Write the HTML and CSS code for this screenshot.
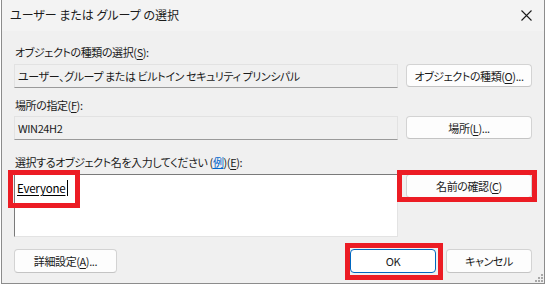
FILE: index.html
```html
<!DOCTYPE html>
<html lang="ja">
<head>
<meta charset="utf-8">
<title>ユーザー または グループ の選択</title>
<link rel="stylesheet" href="styles.css">
</head>
<body>
<div class="window">
  <div class="titlebar">
    <span class="title">ユーザー または グループ の選択</span>
    <span class="close"><svg width="11" height="11" viewBox="0 0 11 11"><path d="M0.5 0.5L10.5 10.5M10.5 0.5L0.5 10.5" stroke="#1b1b1b" stroke-width="1.1" fill="none"/></svg></span>
  </div>
  <div class="content">
    <div class="grid">
      <div class="label l1">オブジェクトの種類の選択(<u>S</u>):</div>
      <div class="field f1">ユーザー、グループ または ビルトイン セキュリティ プリンシパル</div>
      <button class="btn b1">オブジェクトの種類(<u>O</u>)...</button>
      <div class="label l2">場所の指定(<u>F</u>):</div>
      <div class="field f2">WIN24H2</div>
      <button class="btn b2">場所(<u>L</u>)...</button>
      <div class="label l3">選択するオブジェクト名を入力してください (<span class="link">例</span>)(<u>E</u>):</div>
      <div class="textarea"><span class="name">Everyone</span><span class="caret"></span></div>
      <button class="btn b3">名前の確認(<u>C</u>)</button>
    </div>
    <div class="footer">
      <button class="btn adv">詳細設定(<u>A</u>)...</button>
      <div class="spacer"></div>
      <button class="btn ok">OK</button>
      <button class="btn cancel">キャンセル</button>
    </div>
  </div>
  <div class="grip">
    <i class="d d1"></i><i class="d d2"></i><i class="d d3"></i><i class="d d4"></i><i class="d d5"></i><i class="d d6"></i>
  </div>
  <div class="mark m1"></div>
  <div class="mark m2"></div>
  <div class="mark m3"></div>
</div>
</body>
</html>
```

FILE: styles.css
```css
* { box-sizing: border-box; }
html, body { margin: 0; padding: 0; background: #ffffff; }
body {
  font-family: "Noto Sans CJK JP", "Noto Sans", sans-serif;
  font-size: 12px;
  font-feature-settings: "palt";
  color: #1a1a1a;
}
.window {
  position: relative;
  margin-left: 1px;
  width: 544px;
  height: 284px;
  border-left: 1px solid #8c8c8c;
  border-right: 1px solid #8c8c8c;
  border-bottom: 1px solid #8c8c8c;
  background: #f0f0f0;
  display: flex;
  flex-direction: column;
}
.titlebar {
  height: 31px;
  background: #f3f3f3;
  display: flex;
  align-items: center;
  padding-left: 8px;
  padding-right: 8px;
}
.title {
  flex: 1;
  line-height: 16px;
  color: #1b1b1b;
  margin-top: -1px;
}
.close {
  display: flex;
  width: 11px;
  height: 11px;
  margin-right: 4px;
  margin-top: -1px;
}
.content {
  flex: 1;
  padding: 13px 12px 0 12px;
  font-size: 11px;
  letter-spacing: -0.4px;
}
.grid {
  display: grid;
  grid-template-columns: 384px 126px;
  column-gap: 8px;
  align-items: start;
}
.label {
  grid-column: 1;
  line-height: 16px;
  height: 16px;
  white-space: nowrap;
  color: #1a1a1a;
  padding-left: 1px;
}
.l1 { grid-row: 1; }
.l2 { grid-row: 3; margin-top: 9px; }
.l3 { grid-row: 5; margin-top: 14px; }
.field {
  height: 24px;
  background: #f0f0f0;
  border: 1px solid #e2e2e2;
  border-bottom: 1px solid #9a9a9a;
  padding: 3px 0 0 3px;
  line-height: 16px;
  white-space: nowrap;
  overflow: hidden;
  color: #1a1a1a;
}
.f1 { grid-column: 1; grid-row: 2; margin-top: 4px; }
.f2 { grid-column: 1; grid-row: 4; margin-top: 3px; }
.btn {
  font: inherit;
  font-feature-settings: "palt";
  letter-spacing: -0.4px;
  color: #1a1a1a;
  height: 24px;
  background: #fdfdfd;
  border: 1px solid #d3d3d3;
  border-bottom-color: #c4c4c4;
  border-radius: 4px;
  padding: 0;
  line-height: 20px;
  text-align: center;
  white-space: nowrap;
}
.b1 { grid-column: 2; grid-row: 2; margin-top: 4px; height: 23px; }
.b2 { grid-column: 2; grid-row: 4; margin-top: 3px; height: 23px; }
.b3 { grid-column: 2; grid-row: 6; margin-top: 4px; }
.textarea {
  grid-column: 1;
  grid-row: 6;
  margin-top: 4px;
  height: 63px;
  background: #ffffff;
  border-top: 1px solid #7a7a7a;
  border-left: 1px solid #7a7a7a;
  border-right: 1px solid #e3e3e3;
  border-bottom: 1px solid #e3e3e3;
  padding: 5px 0 0 2px;
  display: flex;
  align-items: flex-start;
}
.name {
  line-height: 16px;
  text-decoration: underline;
  text-underline-offset: 2px;
  color: #000;
  font-size: 11.5px;
  letter-spacing: -0.2px;
}
.caret {
  width: 1px;
  height: 16px;
  background: #000;
  margin-left: 2px;
  margin-top: 0px;
}
.link { color: #0066cc; text-decoration: underline; }
u { text-underline-offset: 2px; }
.footer {
  display: flex;
  align-items: center;
  margin-top: 12px;
  gap: 10px;
}
.spacer { flex: 1; }
.adv { width: 103px; }
.ok {
  width: 86px;
  border: 1px solid #0067c0;
  box-shadow: inset 0 0 0 1px #ffffff;
  background: #ffffff;
}
.cancel { width: 86px; }
.grip {
  position: absolute;
  right: 1px;
  bottom: 1px;
  width: 8px;
  height: 8px;
}
.d { position: absolute; width: 2px; height: 2px; background: #a8a8a8; }
.d1 { right: 0; top: 0; }
.d2 { right: 3px; top: 3px; }
.d3 { right: 0; top: 3px; }
.d4 { right: 6px; top: 6px; }
.d5 { right: 3px; top: 6px; }
.d6 { right: 0; top: 6px; }
.mark {
  position: absolute;
  border: 5px solid #ec1c24;
}
.m1 { left: 6px; top: 170px; width: 72px; height: 38px; }
.m2 { left: 395px; top: 170px; width: 140px; height: 32px; }
.m3 { left: 343px; top: 243px; width: 98px; height: 37px; }
```
